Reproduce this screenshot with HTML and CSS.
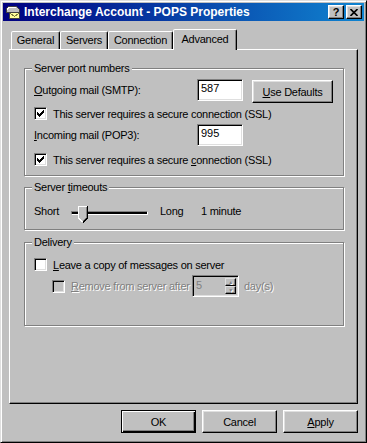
FILE: index.html
```html
<!DOCTYPE html>
<html lang="en">
<head>
    <meta charset="UTF-8">
    <title>Interchange Account - POPS Properties</title>
    <link rel="stylesheet" href="styles.css">
</head>
<body>

<div class="window">
    <!-- Title bar -->
    <div class="titlebar">
        <svg class="app-icon" width="16" height="16" viewBox="0 0 16 16" shape-rendering="crispEdges">
            <path d="M1 6 L4 2 L11 2 L14 5 L14 8 L1 8 Z" fill="#c0c0c0" stroke="#404040"/>
            <path d="M2 6 L4 3 L11 3" fill="none" stroke="#fff"/>
            <rect x="4.5" y="8.5" width="10" height="6" fill="#ffff9c" stroke="#404040"/>
            <path d="M5 9 L9.5 12.5 L14 9" fill="none" stroke="#808040"/>
        </svg>
        <span class="title">Interchange Account - POPS Properties</span>
        <div class="title-buttons">
            <button class="title-btn">?</button>
            <button class="title-btn">
                <svg width="8" height="7" viewBox="0 0 8 7"><path d="M0.5 0 L7.5 7 M7.5 0 L0.5 7" stroke="#000" stroke-width="1.6"/></svg>
            </button>
        </div>
    </div>

    <div class="dialog">
        <div class="tabs">
            <div class="tab tab-general">General</div>
            <div class="tab tab-servers">Servers</div>
            <div class="tab tab-connection">Connection</div>
            <div class="tab tab-advanced active">Advanced</div>
        </div>

        <div class="panel">
            <fieldset class="group group-ports">
                <legend>Server port numbers</legend>
                <div class="field-row">
                    <label class="field-label"><u>O</u>utgoing mail (SMTP):</label>
                    <input class="edit" type="text" value="587">
                    <button class="btn btn-defaults"><u>U</u>se Defaults</button>
                </div>
                <div class="check-row">
                    <span class="check checked"><svg width="7" height="7" viewBox="0 0 7 7" shape-rendering="crispEdges"><path d="M0 2h1v3h-1z M1 3h1v3h-1z M2 4h1v3h-1z M3 3h1v3h-1z M4 2h1v3h-1z M5 1h1v3h-1z M6 0h1v3h-1z" fill="#000"/></svg></span>
                    <span class="check-text">This server requires a secure connection (SSL)</span>
                </div>
                <div class="field-row field-row-in">
                    <label class="field-label"><u>I</u>ncoming mail (POP3):</label>
                    <input class="edit" type="text" value="995">
                </div>
                <div class="check-row check-row-last">
                    <span class="check checked"><svg width="7" height="7" viewBox="0 0 7 7" shape-rendering="crispEdges"><path d="M0 2h1v3h-1z M1 3h1v3h-1z M2 4h1v3h-1z M3 3h1v3h-1z M4 2h1v3h-1z M5 1h1v3h-1z M6 0h1v3h-1z" fill="#000"/></svg></span>
                    <span class="check-text">This server requires a secure <u>c</u>onnection (SSL)</span>
                </div>
            </fieldset>

            <fieldset class="group group-timeouts">
                <legend>Server <u>t</u>imeouts</legend>
                <div class="slider-row">
                    <span class="slider-label">Short</span>
                    <div class="slider">
                        <div class="track"></div>
                        <svg class="thumb" width="11" height="17" viewBox="0 0 11 17" shape-rendering="crispEdges">
                            <path d="M0 0 H10 V12 L5 17 L0 12 Z" fill="#c0c0c0"/>
                            <path d="M0.5 12 V0.5 H9" fill="none" stroke="#fff"/>
                            <path d="M9.5 0 V12 L5 16.5" fill="none" stroke="#000"/>
                            <path d="M8.5 1 V11.5 L5 15" fill="none" stroke="#808080"/>
                            <path d="M0.5 12 L4.5 16" fill="none" stroke="#fff"/>
                        </svg>
                    </div>
                    <span class="slider-long">Long</span>
                    <span>1 minute</span>
                </div>
            </fieldset>

            <fieldset class="group group-delivery">
                <legend>Delivery</legend>
                <div class="check-row check-row-first">
                    <span class="check"></span>
                    <span class="check-text"><u>L</u>eave a copy of messages on server</span>
                </div>
                <div class="spin-row">
                    <span class="check disabled"></span>
                    <span class="check-text disabled-text remove-text"><u>R</u>emove from server after</span>
                    <div class="spin">
                        <span class="spin-value">5</span>
                        <div class="spin-buttons">
                            <span class="spin-btn">&#9650;</span>
                            <span class="spin-btn">&#9660;</span>
                        </div>
                    </div>
                    <span class="disabled-text days">day(s)</span>
                </div>
            </fieldset>
        </div>

        <div class="actions">
            <button class="btn btn-action btn-default">OK</button>
            <button class="btn btn-action">Cancel</button>
            <button class="btn btn-action"><u>A</u>pply</button>
        </div>
    </div>
</div>

</body>
</html>
```

FILE: styles.css
```css
* {
    box-sizing: border-box;
}
body {
    margin: 0;
    font-family: "Liberation Sans", Arial, sans-serif;
    font-size: 11px;
    letter-spacing: -0.25px;
    color: #000;
    background-color: #c0c0c0;
}
u {
    text-decoration: underline;
    text-underline-offset: 1px;
}
/* Window frame */
.window {
    width: 367px;
    height: 443px;
    display: flex;
    flex-direction: column;
    padding: 2px;
    background-color: #c0c0c0;
    border: 1px solid;
    border-color: #dfdfdf #000 #000 #dfdfdf;
    box-shadow: inset 1px 1px #fff, inset -1px -1px #808080;
}
.titlebar {
    height: 18px;
    flex: none;
    display: flex;
    align-items: center;
    padding: 0 2px;
    background: linear-gradient(to right, #000080, #1084d0);
}
.app-icon {
    flex: none;
    margin-right: 3px;
}
.title {
    flex: 1;
    color: #fff;
    font-size: 12px;
    font-weight: bold;
    letter-spacing: 0;
    white-space: nowrap;
}
.title-buttons {
    display: flex;
    gap: 2px;
}
.title-btn {
    width: 16px;
    height: 14px;
    padding: 0;
    display: flex;
    align-items: center;
    justify-content: center;
    font-family: "Liberation Sans", Arial, sans-serif;
    font-size: 11px;
    font-weight: bold;
    color: #000;
    background-color: #c0c0c0;
    border: 1px solid;
    border-color: #fff #000 #000 #fff;
    box-shadow: inset -1px -1px #808080, inset 1px 1px #dfdfdf;
}
/* Dialog body */
.dialog {
    flex: 1;
    display: flex;
    flex-direction: column;
    padding: 8px 6px 7px;
}
.tabs {
    height: 20px;
    flex: none;
    display: flex;
    align-items: flex-end;
    padding-left: 2px;
}
.tab {
    height: 18px;
    display: flex;
    align-items: center;
    justify-content: center;
    padding-bottom: 1px;
    border: 1px solid;
    border-bottom: none;
    border-color: #fff #000 transparent #fff;
    border-radius: 2px 2px 0 0;
    box-shadow: inset -1px 0 #808080;
    background-color: #c0c0c0;
}
.tab-general { width: 49px; }
.tab-servers { width: 48px; }
.tab-connection { width: 65px; }
.tab.active {
    width: 64px;
    height: 21px;
    margin-bottom: -1px;
    padding-bottom: 3px;
    position: relative;
    z-index: 1;
}
.panel {
    height: 355px;
    flex: none;
    padding: 12px 0 0 14px;
    border: 1px solid;
    border-color: #fff #000 #000 #fff;
    box-shadow: inset -1px -1px #808080;
}
/* Group boxes */
.group {
    width: 320px;
    margin: 0;
    min-width: 0;
    padding: 4px 9px 0;
    border: 1px solid #808080;
    box-shadow: inset 1px 1px #fff, 1px 1px #fff;
}
.group legend {
    padding: 0 2px;
    margin-left: -2px;
    line-height: 13px;
    background-color: #c0c0c0;
}
.group-ports { height: 114px; }
.group-timeouts {
    height: 49px;
    margin-top: 5px;
}
.group-delivery {
    height: 90px;
    margin-top: 6px;
}
.field-row {
    height: 22px;
    display: flex;
    align-items: flex-start;
}
.field-row-in {
    margin-top: 4px;
}
.field-label {
    width: 163px;
    line-height: 22px;
}
.edit {
    width: 46px;
    height: 22px;
    margin: 0;
    padding: 0 2px 4px 3px;
    font-family: "Liberation Sans", Arial, sans-serif;
    font-size: 11px;
    color: #000;
    background-color: #fff;
    border: 1px solid;
    border-color: #808080 #fff #fff #808080;
    box-shadow: inset 1px 1px #000, inset -1px -1px #dfdfdf;
    outline: none;
}
.btn {
    height: 23px;
    padding: 0;
    font-family: "Liberation Sans", Arial, sans-serif;
    font-size: 11px;
    letter-spacing: -0.25px;
    color: #000;
    background-color: #c0c0c0;
    border: 1px solid;
    border-color: #fff #000 #000 #fff;
    box-shadow: inset -1px -1px #808080, inset 1px 1px #dfdfdf;
}
.btn-defaults {
    width: 81px;
    margin: 1px 0 0 9px;
}
.check-row {
    height: 13px;
    display: flex;
    align-items: center;
    margin-top: 6px;
}
.check-row-last {
    margin-top: 7px;
}
.check-row-first {
    margin-top: 5px;
}
.check {
    width: 13px;
    height: 13px;
    flex: none;
    display: flex;
    align-items: center;
    justify-content: center;
    background-color: #fff;
    border: 1px solid;
    border-color: #808080 #fff #fff #808080;
    box-shadow: inset 1px 1px #000, inset -1px -1px #dfdfdf;
}
.check.disabled {
    background-color: #c0c0c0;
}
.check-text {
    margin-left: 6px;
    white-space: nowrap;
}
.disabled-text {
    color: #808080;
    text-shadow: 1px 1px 0 #fff;
}
/* Slider */
.slider-row {
    height: 24px;
    margin-top: 1px;
    display: flex;
    align-items: flex-start;
    line-height: 24px;
}
.slider-label {
    width: 37px;
}
.slider {
    width: 89px;
    height: 17px;
    margin-top: 7px;
    position: relative;
}
.track {
    width: 77px;
    height: 4px;
    margin-top: 5px;
    background-color: #000;
    border: 1px solid;
    border-color: #808080 #fff #fff #808080;
}
.thumb {
    position: absolute;
    left: 7px;
    top: 0;
}
.slider-long {
    width: 41px;
}
/* Spin box */
.spin-row {
    height: 22px;
    margin-top: 4px;
    padding-left: 18px;
    display: flex;
    align-items: center;
}
.remove-text {
    width: 121px;
    flex: none;
}
.spin {
    width: 47px;
    height: 22px;
    flex: none;
    display: flex;
    padding: 2px;
    background-color: #c0c0c0;
    border: 1px solid;
    border-color: #808080 #fff #fff #808080;
    box-shadow: inset 1px 1px #000, inset -1px -1px #dfdfdf;
}
.spin-value {
    flex: 1;
    padding-left: 1px;
    line-height: 14px;
    color: #808080;
}
.spin-buttons {
    width: 11px;
    display: flex;
    flex-direction: column;
}
.spin-btn {
    height: 8px;
    display: flex;
    align-items: center;
    justify-content: center;
    font-size: 5px;
    color: #808080;
    text-shadow: 1px 1px 0 #fff;
    border: 1px solid;
    border-color: #dfdfdf #000 #000 #dfdfdf;
    box-shadow: inset -1px -1px #808080;
}
.days {
    margin-left: 5px;
}
/* Bottom buttons */
.actions {
    margin-top: 6px;
    display: flex;
    justify-content: flex-end;
    gap: 6px;
}
.btn-action {
    width: 75px;
}
.btn-default {
    border-color: #000;
    box-shadow: inset 1px 1px #fff, inset -1px -1px #000, inset -2px -2px #808080;
}
```
